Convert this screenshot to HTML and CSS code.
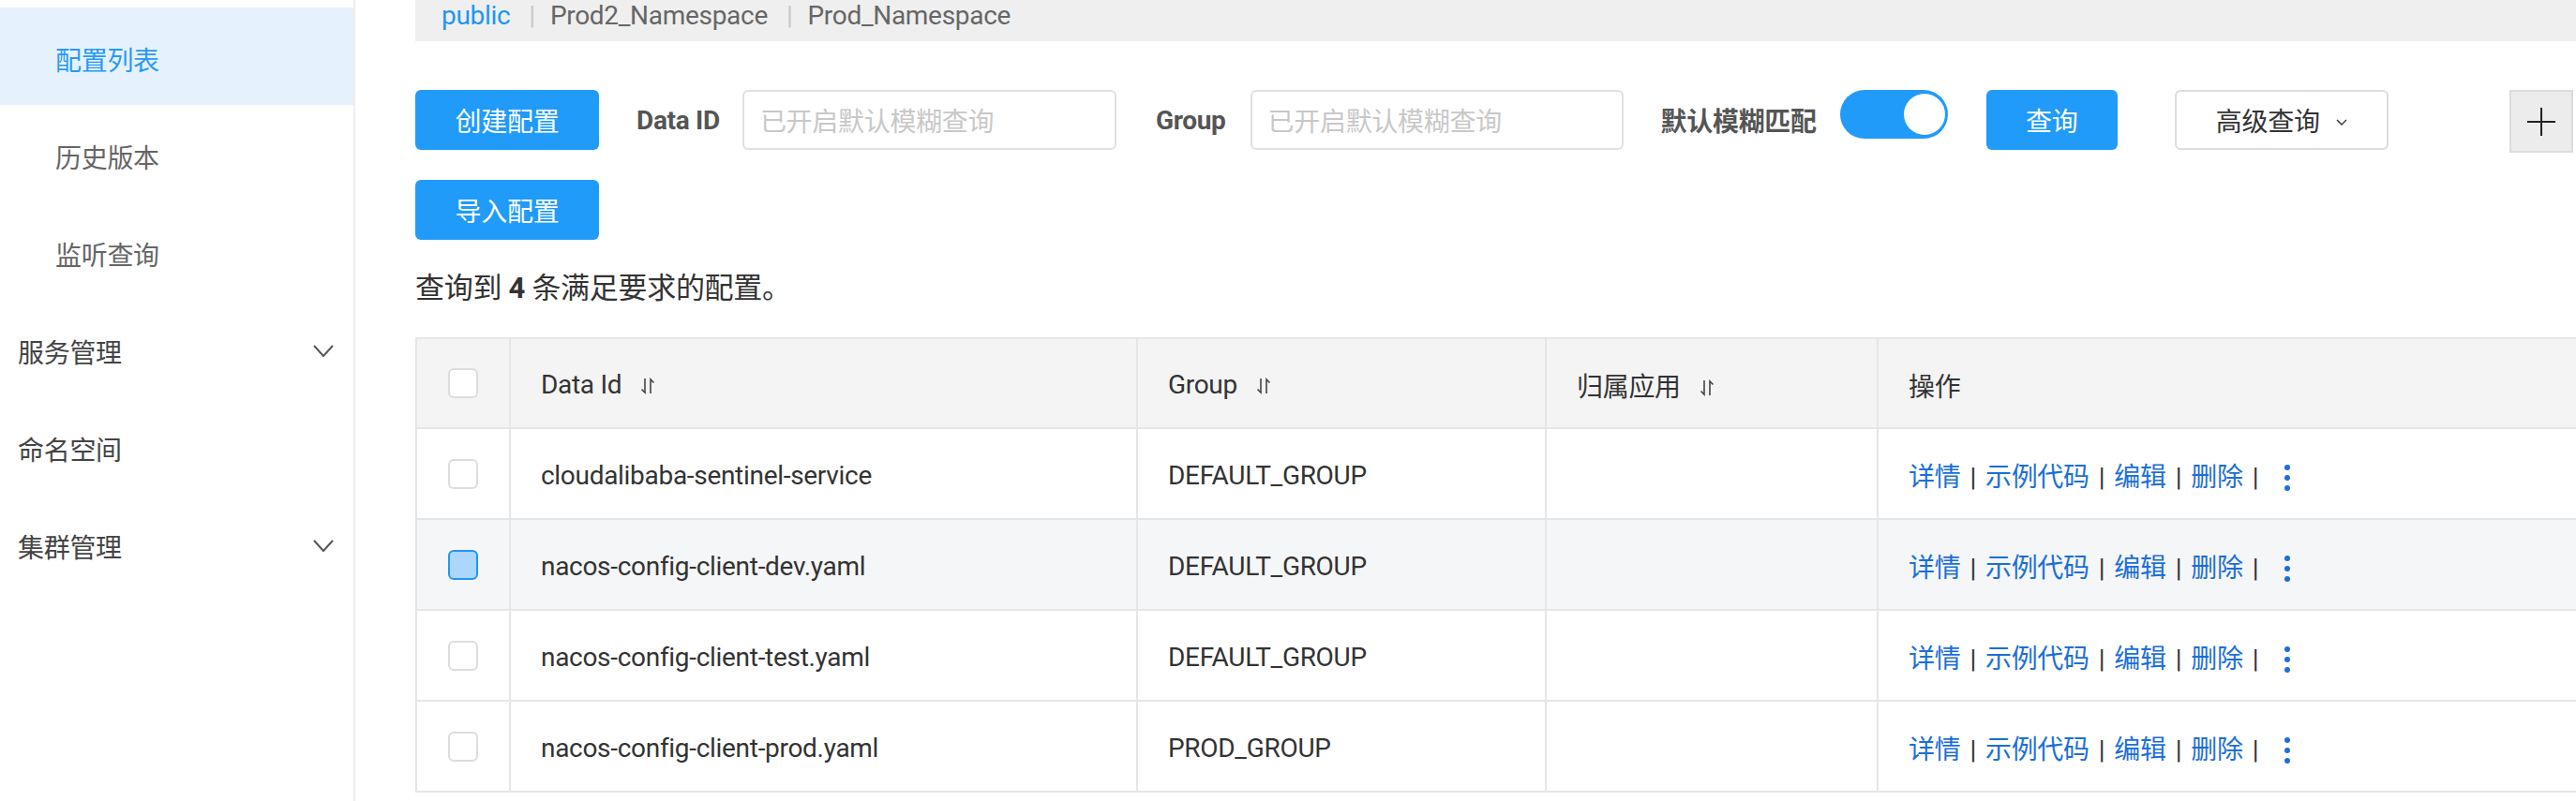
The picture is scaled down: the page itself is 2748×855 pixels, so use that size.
FILE: index.html
```html
<!DOCTYPE html>
<html lang="zh-CN">
<head>
<meta charset="utf-8">
<title>配置列表</title>
<link rel="stylesheet" href="styles.css">
</head>
<body>
<div class="layout">
  <nav class="sidebar">
    <div class="menu-item sub active">配置列表</div>
    <div class="menu-item sub">历史版本</div>
    <div class="menu-item sub">监听查询</div>
    <div class="menu-item top">服务管理<svg class="chev" viewBox="0 0 22 13" width="22" height="13"><polyline points="1,1 11,12 21,1" fill="none" stroke="#555" stroke-width="2"/></svg></div>
    <div class="menu-item top">命名空间</div>
    <div class="menu-item top">集群管理<svg class="chev" viewBox="0 0 22 13" width="22" height="13"><polyline points="1,1 11,12 21,1" fill="none" stroke="#555" stroke-width="2"/></svg></div>
  </nav>
  <main class="main">
    <div class="ns-bar">
      <span class="ns ns-active">public</span><span class="ns-sep">|</span><span class="ns">Prod2_Namespace</span><span class="ns-sep">|</span><span class="ns">Prod_Namespace</span>
    </div>

    <div class="toolbar">
      <button class="btn btn-primary btn-create">创建配置</button>
      <span class="label label-dataid">Data ID</span>
      <div class="input input-dataid"><span class="placeholder">已开启默认模糊查询</span></div>
      <span class="label label-group">Group</span>
      <div class="input input-group"><span class="placeholder">已开启默认模糊查询</span></div>
      <span class="label label-fuzzy">默认模糊匹配</span>
      <div class="switch"><span class="knob"></span></div>
      <button class="btn btn-primary btn-search">查询</button>
      <button class="btn btn-adv">高级查询<svg class="adv-chev" viewBox="0 0 12 7" width="12" height="7"><polyline points="1,1 6,6 11,1" fill="none" stroke="#333" stroke-width="1.4"/></svg></button>
      <button class="btn-plus"><svg viewBox="0 0 30 30" width="30" height="30"><line x1="0" y1="15" x2="30" y2="15" stroke="#222" stroke-width="2"/><line x1="15" y1="0" x2="15" y2="30" stroke="#222" stroke-width="2"/></svg></button>
    </div>

    <div class="toolbar2">
      <button class="btn btn-primary btn-create">导入配置</button>
    </div>

    <div class="count">查询到 <b>4</b> 条满足要求的配置。</div>

    <table class="grid">
      <colgroup>
        <col class="c-check"><col class="c-id"><col class="c-group"><col class="c-app"><col class="c-op">
      </colgroup>
      <thead>
        <tr>
          <th class="cell-check"><span class="checkbox"></span></th>
          <th>Data Id<svg class="sort" viewBox="0 0 16 18" width="16" height="18"><path d="M5 1 V16 L1.5 12.5" fill="none" stroke="#444" stroke-width="1.6"/><path d="M11 17 V2 L14.5 5.5" fill="none" stroke="#444" stroke-width="1.6"/></svg></th>
          <th>Group<svg class="sort" viewBox="0 0 16 18" width="16" height="18"><path d="M5 1 V16 L1.5 12.5" fill="none" stroke="#444" stroke-width="1.6"/><path d="M11 17 V2 L14.5 5.5" fill="none" stroke="#444" stroke-width="1.6"/></svg></th>
          <th>归属应用<svg class="sort" viewBox="0 0 16 18" width="16" height="18"><path d="M5 1 V16 L1.5 12.5" fill="none" stroke="#444" stroke-width="1.6"/><path d="M11 17 V2 L14.5 5.5" fill="none" stroke="#444" stroke-width="1.6"/></svg></th>
          <th>操作</th>
        </tr>
      </thead>
      <tbody>
        <tr>
          <td class="cell-check"><span class="checkbox"></span></td>
          <td>cloudalibaba-sentinel-service</td>
          <td>DEFAULT_GROUP</td>
          <td></td>
          <td class="ops"><a>详情</a><span class="sep">|</span><a>示例代码</a><span class="sep">|</span><a>编辑</a><span class="sep">|</span><a>删除</a><span class="sep">|</span><svg class="more" viewBox="0 0 6 28" width="6" height="28"><circle cx="3" cy="3" r="3" fill="#1b6fd8"/><circle cx="3" cy="14" r="3" fill="#1b6fd8"/><circle cx="3" cy="25" r="3" fill="#1b6fd8"/></svg></td>
        </tr>
        <tr class="hover">
          <td class="cell-check"><span class="checkbox checkbox-hover"></span></td>
          <td>nacos-config-client-dev.yaml</td>
          <td>DEFAULT_GROUP</td>
          <td></td>
          <td class="ops"><a>详情</a><span class="sep">|</span><a>示例代码</a><span class="sep">|</span><a>编辑</a><span class="sep">|</span><a>删除</a><span class="sep">|</span><svg class="more" viewBox="0 0 6 28" width="6" height="28"><circle cx="3" cy="3" r="3" fill="#1b6fd8"/><circle cx="3" cy="14" r="3" fill="#1b6fd8"/><circle cx="3" cy="25" r="3" fill="#1b6fd8"/></svg></td>
        </tr>
        <tr>
          <td class="cell-check"><span class="checkbox"></span></td>
          <td>nacos-config-client-test.yaml</td>
          <td>DEFAULT_GROUP</td>
          <td></td>
          <td class="ops"><a>详情</a><span class="sep">|</span><a>示例代码</a><span class="sep">|</span><a>编辑</a><span class="sep">|</span><a>删除</a><span class="sep">|</span><svg class="more" viewBox="0 0 6 28" width="6" height="28"><circle cx="3" cy="3" r="3" fill="#1b6fd8"/><circle cx="3" cy="14" r="3" fill="#1b6fd8"/><circle cx="3" cy="25" r="3" fill="#1b6fd8"/></svg></td>
        </tr>
        <tr>
          <td class="cell-check"><span class="checkbox"></span></td>
          <td>nacos-config-client-prod.yaml</td>
          <td>PROD_GROUP</td>
          <td></td>
          <td class="ops"><a>详情</a><span class="sep">|</span><a>示例代码</a><span class="sep">|</span><a>编辑</a><span class="sep">|</span><a>删除</a><span class="sep">|</span><svg class="more" viewBox="0 0 6 28" width="6" height="28"><circle cx="3" cy="3" r="3" fill="#1b6fd8"/><circle cx="3" cy="14" r="3" fill="#1b6fd8"/><circle cx="3" cy="25" r="3" fill="#1b6fd8"/></svg></td>
        </tr>
      </tbody>
    </table>
  </main>
</div>
</body>
</html>
```
FILE: styles.css
```css
* { box-sizing: border-box; }
html, body {
  margin: 0;
  padding: 0;
  background: #fff;
}
body {
  width: 2748px;
  height: 855px;
  overflow: hidden;
  font-family: Roboto, "Noto Sans CJK SC", sans-serif;
  font-size: 28px;
  letter-spacing: -0.3px;
  color: #333;
}
.layout {
  display: flex;
  height: 855px;
}

/* sidebar */
.sidebar {
  flex: none;
  width: 379px;
  border-right: 2px solid #eee;
  padding-top: 8px;
}
.menu-item {
  height: 104px;
  display: flex;
  align-items: center;
  font-size: 28px;
  padding-top: 5px;
}
.menu-item.sub {
  padding-left: 59px;
  color: #666;
}
.menu-item.sub.active {
  background: #e5f2fd;
  color: #2a9af2;
}
.menu-item.top {
  padding-left: 19px;
  padding-right: 21px;
  color: #444;
  justify-content: space-between;
}
.chev { display: block; }

/* main */
.main {
  flex: 1;
  min-width: 0;
  padding-left: 64px;
}
.ns-bar {
  height: 44px;
  background: #efefef;
  display: flex;
  align-items: flex-start;
  padding-left: 28px;
  font-size: 28px;
  line-height: 33px;
  color: #666;
}
.ns-active { color: #2196f3; }
.ns-sep {
  color: #c8c8c8;
  margin: 0 16px 0 20px;
}

.toolbar {
  margin-top: 52px;
  display: flex;
  align-items: center;
  height: 64px;
}
.btn {
  font-family: Roboto, "Noto Sans CJK SC", sans-serif;
  font-size: 28px;
  letter-spacing: -0.3px;
  height: 64px;
  border-radius: 6px;
  padding: 0;
  display: flex;
  align-items: center;
  justify-content: center;
  flex: none;
}
.btn-primary {
  background: #209bfa;
  border: none;
  color: #fff;
}
.btn-create { width: 196px; }
.btn-search { width: 140px; margin-left: 41px; }
.btn-adv {
  width: 228px;
  margin-left: 61px;
  background: #fff;
  border: 2px solid #ddd;
  color: #333;
}
.adv-chev { margin-left: 17px; margin-top: 4px; }
.btn-plus {
  flex: none;
  width: 68px;
  height: 67px;
  margin-left: 129px;
  align-self: flex-start;
  background: #ececec;
  border: 2px solid #dcdcdc;
  padding: 0;
  display: flex;
  align-items: center;
  justify-content: center;
}
.btn-plus svg { display: block; }

.label {
  font-weight: bold;
  color: #555;
  flex: none;
  white-space: nowrap;
}
.label-dataid { margin-left: 40px; }
.label-group { margin-left: 42px; }
.label-fuzzy { margin-left: 40px; }

.input {
  flex: none;
  height: 64px;
  border: 2px solid #e0e0e0;
  border-radius: 6px;
  display: flex;
  align-items: center;
  padding-left: 17px;
  background: #fff;
}
.input-dataid { width: 399px; margin-left: 24px; }
.input-group { width: 398px; margin-left: 26px; }
.placeholder { color: #c8c8c8; }

.switch {
  flex: none;
  align-self: flex-start;
  position: relative;
  width: 115px;
  height: 52px;
  margin-left: 25px;
  border-radius: 26px;
  background: #209bfa;
}
.knob {
  position: absolute;
  right: 3px;
  top: 4px;
  width: 44px;
  height: 44px;
  border-radius: 50%;
  background: #fff;
}

.toolbar2 {
  margin-top: 32px;
  display: flex;
}

.count {
  margin-top: 30px;
  font-size: 31px;
  line-height: 44px;
  height: 44px;
  color: #333;
}

/* table */
.grid {
  margin-top: 30px;
  width: 2305px;
  table-layout: fixed;
  border-collapse: separate;
  border-spacing: 0;
  border-bottom: 2px solid #e6e6e6;
}
.c-check { width: 100px; }
.c-id { width: 669px; }
.c-group { width: 436px; }
.c-app { width: 354px; }
.c-op { width: 746px; }
.grid th, .grid td {
  border-top: 2px solid #e6e6e6;
  border-left: 2px solid #e6e6e6;
  padding: 3px 0 0 32px;
  text-align: left;
  vertical-align: middle;
  font-size: 28px;
  font-weight: normal;
  color: #333;
  white-space: nowrap;
  box-sizing: content-box;
}
.grid th {
  height: 91px;
  background: #f4f4f4;
}
.grid td {
  height: 92px;
  background: #fff;
}
.grid tr.hover td { background: #f5f6f8; }
.grid .cell-check {
  padding: 0;
  text-align: center;
}
.grid th.cell-check { height: 94px; }
.grid td.cell-check { height: 95px; }
.checkbox {
  display: inline-block;
  width: 32px;
  height: 32px;
  border: 2px solid #ddd;
  border-radius: 6px;
  background: #fff;
  vertical-align: middle;
  margin-top: -4px;
}
.checkbox-hover {
  background: #acd6fb;
  border-color: #2196f3;
}
.sort {
  vertical-align: middle;
  margin-left: 20px;
  margin-top: -2px;
}
.ops a { color: #1b6fd8; }
.ops .sep {
  color: #333;
  margin: 0 10px;
}
.more {
  vertical-align: middle;
  margin-left: 18px;
  margin-top: -4px;
}
```
